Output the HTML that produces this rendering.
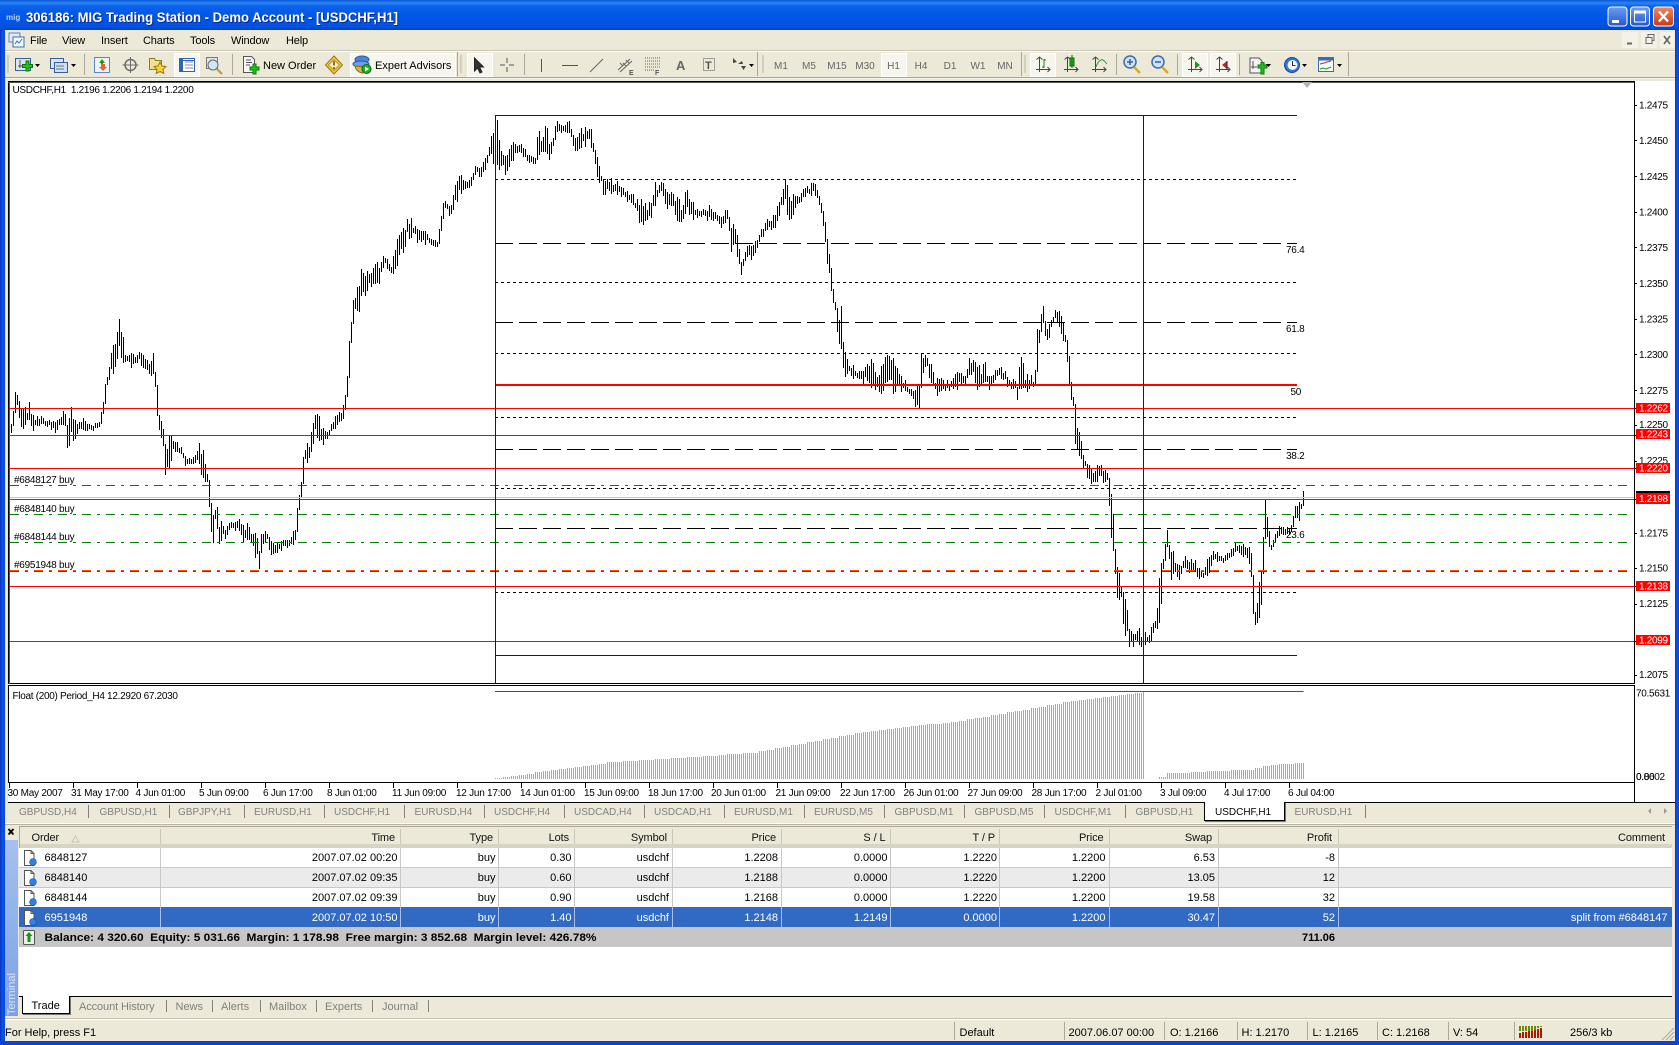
<!DOCTYPE html>
<html><head><meta charset="utf-8"><title>MIG Trading Station</title>
<style>
html,body{margin:0;padding:0;background:#ece9d8;width:1679px;height:1045px;overflow:hidden}
svg{display:block;position:absolute;left:0;top:0}
text{font-family:"Liberation Sans",sans-serif;font-size:11px;fill:#000;white-space:pre}
.c,.c text{font-size:10px;letter-spacing:-.3px}
.a,.a text{font-size:10px;letter-spacing:-.25px}
.w,.w text{fill:#fff}
.tab text{font-size:10px;fill:#808080}
.tb text{font-size:10px;fill:#666}
.g,.g text{fill:#808080}
.m text{letter-spacing:-.15px}
.hd,.hd text{font-size:11px;fill:#111;letter-spacing:-.1px}
.sep{stroke:#aca899;stroke-width:1;shape-rendering:crispEdges}
.l{shape-rendering:crispEdges;fill:none}
</style></head><body>
<svg width="1679" height="1045" viewBox="0 0 1679 1045" xmlns="http://www.w3.org/2000/svg">
<defs>
<linearGradient id="tg" x1="0" y1="0" x2="0" y2="1">
<stop offset="0" stop-color="#0a56d6"/><stop offset=".1" stop-color="#2a86f4"/><stop offset=".2" stop-color="#0d62ea"/><stop offset=".55" stop-color="#0057e8"/><stop offset=".88" stop-color="#0052e2"/><stop offset="1" stop-color="#0042c8"/>
</linearGradient>
<linearGradient id="lb" x1="0" y1="0" x2="1" y2="0"><stop offset="0" stop-color="#0a30b8"/><stop offset=".5" stop-color="#0a56ec"/><stop offset="1" stop-color="#0a44d8"/></linearGradient>
<linearGradient id="mb" x1="0" y1="0" x2="0" y2="1"><stop offset="0" stop-color="#6f9cf0"/><stop offset="1" stop-color="#2358cc"/></linearGradient>
<linearGradient id="cb" x1="0" y1="0" x2="0" y2="1"><stop offset="0" stop-color="#f08a60"/><stop offset="1" stop-color="#c83a10"/></linearGradient>
<linearGradient id="st" x1="0" y1="0" x2="0" y2="1"><stop offset="0" stop-color="#a6c0ee"/><stop offset="1" stop-color="#7ea1e2"/></linearGradient>
<symbol id="doc" viewBox="0 0 14 16" width="14" height="16">
<path d="M1.5 .5H8L11 3.5V15.5H1.5Z" fill="#fff" stroke="#555"/><path d="M8 .5V3.5H11" fill="none" stroke="#555"/><circle cx="10" cy="12" r="3.4" fill="#2f80e8" stroke="#1a4fa8" stroke-width=".6"/>
</symbol>
<symbol id="ax" viewBox="0 0 16 18" width="16" height="18">
<path d="M4.5 1V16M1 13.5H15M1.5 3.5L4.5 1L7.5 3.5M12.5 11L15 13.5L12.5 16" fill="none" stroke="#444" stroke-width="1"/>
</symbol>
</defs>

<rect x="0" y="0" width="1679" height="1045" fill="#ece9d8"/>
<rect x="0" y="0" width="1679" height="30" fill="url(#tg)"/>
<rect x="0" y="30" width="5" height="1015" fill="url(#lb)"/>
<rect x="1675" y="30" width="4" height="1015" fill="url(#lb)"/>
<rect x="0" y="1041" width="1679" height="4" fill="#0a44d0"/>

<!-- title -->
<text x="6" y="20" style="font-size:8px;fill:#bcd0f2;font-weight:bold">mig</text>
<text x="26" y="22" textLength="372" lengthAdjust="spacingAndGlyphs" style="font-size:14px;font-weight:bold;fill:#0a2a90" transform="translate(1,1)">306186: MIG Trading Station - Demo Account - [USDCHF,H1]</text>
<text x="26" y="22" textLength="372" lengthAdjust="spacingAndGlyphs" style="font-size:14px;font-weight:bold;fill:#fff">306186: MIG Trading Station - Demo Account - [USDCHF,H1]</text>
<rect x="1608" y="7" width="19" height="19" rx="3" fill="url(#mb)" stroke="#fff"/>
<rect x="1612" y="20" width="7" height="3" fill="#fff"/>
<rect x="1630.5" y="7" width="19" height="19" rx="3" fill="url(#mb)" stroke="#fff"/>
<rect x="1634.5" y="11" width="11" height="11" fill="none" stroke="#fff"/><rect x="1634" y="10.5" width="12" height="3" fill="#fff"/>
<rect x="1653.5" y="7" width="20" height="19" rx="3" fill="url(#cb)" stroke="#fff"/>
<path d="M1659 11.5L1668 21.5M1668 11.5L1659 21.5" stroke="#fff" stroke-width="2.4"/>

<!-- menu -->
<rect x="5" y="30" width="1670" height="20" fill="#ece9d8"/>
<path d="M5 50.5H1675" stroke="#c9c6b6" class="l"/><path d="M5 51.5H1675" stroke="#fff" class="l"/>
<rect x="9" y="33" width="11" height="9" fill="#dfe9f9" stroke="#5a86c8"/><rect x="13" y="37" width="11" height="10" fill="#f4f8ff" stroke="#3e6fb8"/><path d="M15 44l2-3 2 2 3-4" stroke="#3e6fb8" fill="none"/>
<g class="m"><text x="30" y="44">File</text><text x="62" y="44">View</text><text x="101" y="44">Insert</text><text x="143" y="44">Charts</text><text x="190" y="44">Tools</text><text x="231" y="44">Window</text><text x="286" y="44">Help</text></g>
<rect x="1622" y="32" width="16" height="16" fill="#f4f2e8"/><rect x="1641" y="32" width="16" height="16" fill="#f4f2e8"/><rect x="1660" y="32" width="15" height="16" fill="#f4f2e8"/>
<path d="M1627 43.5h5" stroke="#666" stroke-width="2"/>
<rect x="1646" y="37.5" width="6" height="6" fill="none" stroke="#666"/><path d="M1648 37v-2.5h6v6h-2" fill="none" stroke="#666"/>
<path d="M1664 36l6 8M1670 36l-6 8" stroke="#666" stroke-width="1.6"/>

<!-- toolbar -->
<path d="M5 77.5H1675" stroke="#a8a596" class="l"/><path d="M5 78.5H1675" stroke="#f5f3ea" class="l"/>
<g fill="#b8b5a6">
<path d="M7 56h3M7 58h3M7 60h3M7 62h3M7 64h3M7 66h3M7 68h3M7 70h3M7 72h3" stroke="#b8b5a6" stroke-dasharray="2 1"/>
<path d="M460 56h3M460 58h3M460 60h3M460 62h3M460 64h3M460 66h3M460 68h3M460 70h3M460 72h3" stroke="#b8b5a6" stroke-dasharray="2 1"/>
<path d="M762 56h3M762 58h3M762 60h3M762 62h3M762 64h3M762 66h3M762 68h3M762 70h3M762 72h3" stroke="#b8b5a6" stroke-dasharray="2 1"/>
<path d="M1024 56h3M1024 58h3M1024 60h3M1024 62h3M1024 64h3M1024 66h3M1024 68h3M1024 70h3M1024 72h3" stroke="#b8b5a6" stroke-dasharray="2 1"/>
</g>
<g class="sep"><path d="M84.5 54V75M232.5 54V75M457.5 52V76M524.5 54V75M757.5 52V76M1021.5 52V76M1116.5 54V75M1177.5 54V75M1239.5 54V75M1348.5 52V76"/></g>
<!-- selected boxes -->
<g fill="#f6f5ee" stroke="#fff"><rect x="174.5" y="53.5" width="25" height="23"/><rect x="350.5" y="53.5" width="105" height="23"/><rect x="467.5" y="53.5" width="25" height="23"/><rect x="881.5" y="53.5" width="25" height="23"/><rect x="1030.5" y="53.5" width="25" height="23"/><rect x="1182.5" y="53.5" width="25" height="23"/><rect x="1210.5" y="53.5" width="25" height="23"/></g>
<!-- add chart -->
<rect x="15.5" y="58.5" width="15" height="12" fill="#dce6f2" stroke="#3a5f96"/><path d="M20 60v8M18 66h8" stroke="#555" fill="none"/>
<path d="M27 60h3v3.5h3.5v3h-3.5v3.500h-3v-3.500h-3.500v-3h3.500z" transform="translate(-1,1)" fill="#1cc41c" stroke="#0b7a0b"/>
<path d="M35 64h5l-2.500 3z" fill="#000"/>
<rect x="50.500" y="58.500" width="13" height="10" fill="#dce6f2" stroke="#3a5f96"/><rect x="54.500" y="62.500" width="13" height="10" fill="#cfdff4" stroke="#3a5f96"/><path d="M56 66h8M56 69h8" stroke="#678"/>
<path d="M71 64h5l-2.500 3z" fill="#000"/>
<!-- arrows window -->
<rect x="94.500" y="57.500" width="15" height="15" fill="#eef3fa" stroke="#5a86c8"/><path d="M99 63l3-4 3 4h-2v3h-2v-3z" fill="#1a9a1a"/><path d="M100 66h4v3h2l-4 4-4-4h2z" transform="translate(1,-2)" fill="#e8622a"/>
<!-- crosshair -->
<circle cx="130.500" cy="65" r="5.500" fill="none" stroke="#6b6b6b" stroke-width="1.500"/><path d="M130.500 57v16M122.500 65h16" stroke="#6b6b6b"/>
<!-- folders star -->
<path d="M149.500 58.500h5l1 2h6v9h-12z" fill="#f5e08a" stroke="#8a7a30"/><path d="M160 62l2 4 4 .5-3 3 .800 4-3.800-2-3.800 2 .800-4-3-3 4-.500z" fill="#f6d23c" stroke="#9a7d10"/>
<!-- market watch -->
<rect x="179.500" y="58.500" width="15" height="13" fill="#fff" stroke="#2f64b4"/><rect x="180" y="59" width="3" height="12" fill="#2f64b4"/><path d="M185 62h8M185 65h8M185 68h8" stroke="#889"/><rect x="180" y="60" width="14" height="1" fill="#2f64b4"/>
<!-- magnify -->
<rect x="206.500" y="57.500" width="11" height="11" fill="#dfe4ee" stroke="#7a7a7a"/><circle cx="213" cy="65" r="5" fill="#d3e6f7" stroke="#6a6a6a"/><path d="M217 69l5 5" stroke="#c89a2a" stroke-width="2.200"/>
<!-- new order -->
<path d="M243.500 56.500h8l3 3v13h-11z" fill="#f8f8f8" stroke="#555"/><path d="M246 60h5M246 62.500h6M246 65h4" stroke="#555"/>
<path d="M250 66h3v-3h3v3h3v3h-3v4h-3v-4h-3z" fill="#1cc41c" stroke="#0b7a0b" transform="translate(0,1)"/>
<text x="263" y="69">New Order</text>
<path d="M334 56l8.500 9-8.500 9-8.500-9z" fill="#f4cc40" stroke="#9a7812"/><path d="M334 59.500l5.500 5.500-5.500 5.500-5.500-5.500z" fill="#fbeec0" stroke="#b8902a"/><path d="M334 61v4.500" stroke="#7a4a00" stroke-width="1.500"/><circle cx="334" cy="68" r="1" fill="#7a4a00"/>
<!-- expert hat -->
<ellipse cx="362" cy="59.500" rx="7" ry="3.500" fill="#4a86d8" stroke="#2a5aa8"/><ellipse cx="361" cy="64" rx="8" ry="3" fill="#6aa0e4" stroke="#2a5aa8"/><path d="M355 66c1 5 5 7 8 7v-6z" fill="#d8b24c" stroke="#8a6a18"/><circle cx="366.500" cy="69" r="4.500" fill="#22b022" stroke="#0b6a0b"/><path d="M365 66.500l4 2.500-4 2.500z" fill="#fff"/>
<text x="375" y="69">Expert Advisors</text>
<!-- cursor -->
<path d="M474.500 58v13l3-3 2.500 5 2-1-2.500-5h4z" fill="#333" stroke="#222"/>
<path d="M507 58v14M500 65h14" stroke="#555"/><path d="M507 63v4M505 65h4" stroke="#ece9d8" stroke-width="2"/>
<path d="M541.500 59v13" stroke="#555"/><path d="M562 65.500h16" stroke="#555"/><path d="M590 72l13-13" stroke="#666"/>
<path d="M618 70l12-11M620 72l12-11M623 66l-3-3M626 66l-3-3M629 63l-3-3" stroke="#666" fill="none"/><text x="629" y="75" style="font-size:7px;fill:#555;font-weight:bold">E</text>
<path d="M645 58h15M645 61h15M645 64h15M645 67h15M645 70h10" stroke="#666" stroke-dasharray="1 1"/><text x="655" y="75" style="font-size:7px;fill:#555;font-weight:bold">F</text>
<text x="676" y="70" style="font-size:13px;font-weight:bold;fill:#666">A</text>
<rect x="703.500" y="58.500" width="11" height="12" fill="none" stroke="#555" stroke-dasharray="1 1"/><text x="705" y="69" style="font-size:11px;font-weight:bold;fill:#555">T</text>
<path d="M733 58l4 4-4 1zM738 64l4-3 1 3zM741 66l5 0-2.500 4z" fill="#444"/><path d="M749 64h5l-2.500 3z" fill="#000"/>
<!-- periods -->
<g class="tb" text-anchor="middle">
<text x="781" y="69">M1</text><text x="809" y="69">M5</text><text x="837" y="69">M15</text><text x="865" y="69">M30</text><text x="893.500" y="69">H1</text><text x="921" y="69">H4</text><text x="950" y="69">D1</text><text x="978" y="69">W1</text><text x="1005" y="69">MN</text>
</g>
<!-- chart types -->
<use href="#ax" x="1035" y="56"/><path d="M1044 59v9M1044 60h2M1042 67h2" stroke="#0a8a0a" fill="none"/>
<use href="#ax" x="1063" y="56"/><rect x="1070" y="58" width="4" height="8" fill="#20c020" stroke="#0a6a0a"/><path d="M1072 55v13" stroke="#0a6a0a"/>
<use href="#ax" x="1091" y="56"/><path d="M1096 67c2-6 5-8 7-7s3 3 4 4" fill="none" stroke="#2a9a3a"/>
<!-- zoom -->
<circle cx="1130" cy="62" r="6" fill="#cfe2f7" stroke="#3a6ea8" stroke-width="1.500"/><path d="M1127 62h6M1130 59v6" stroke="#2f60a0" stroke-width="1.500"/><path d="M1134 67l6 6" stroke="#d8a830" stroke-width="2.500"/>
<circle cx="1158" cy="62" r="6" fill="#cfe2f7" stroke="#3a6ea8" stroke-width="1.500"/><path d="M1155 62h6" stroke="#2f60a0" stroke-width="1.500"/><path d="M1162 67l6 6" stroke="#d8a830" stroke-width="2.500"/>
<use href="#ax" x="1187" y="56"/><path d="M1195 61v8l5-4z" fill="#1a9a1a"/>
<use href="#ax" x="1215" y="56"/><path d="M1227 61v8l-5-4z" fill="#c02a10"/><path d="M1227 61v9" stroke="#223"/>
<!-- new chart -->
<path d="M1250 58h9l3 3v12h-12z" fill="#f4f4f4" stroke="#555"/><path d="M1253 61v8M1251 67h6" stroke="#555"/><path d="M1258 65h3v-2.500h3v2.500h3v3h-3v6h-3v-6h-3z" fill="#1cc41c" stroke="#0b7a0b"/>
<path d="M1266 64h5l-2.500 3z" fill="#000"/>
<circle cx="1292" cy="65" r="7.500" fill="#2c74d8" stroke="#164a9c"/><circle cx="1292.500" cy="65" r="5" fill="#eef4fb"/><path d="M1292.500 61v4.500h3" fill="none" stroke="#333"/>
<path d="M1302 64h5l-2.500 3z" fill="#000"/>
<rect x="1318.500" y="57.500" width="15" height="14" fill="#f6f8fc" stroke="#3a6ea8"/><rect x="1319" y="58" width="14" height="2.500" fill="#3a6ea8"/><path d="M1320 64l4-1 3-1 4-1" stroke="#c0321a" fill="none"/><path d="M1320 69l3-1 3 1 5-2" stroke="#1a9a1a" fill="none"/>
<path d="M1337 64h5l-2.500 3z" fill="#000"/>

<!-- chart area -->
<rect x="8" y="81" width="1667" height="721" fill="#fff"/>
<path id="bars" class="l" stroke="#000" stroke-width="1" d=""/>
<!-- horizontal objects -->
<g class="l">
<path d="M8 408.500H1634M8 435.500H1634M8 468.500H1634M8 499.500H1634M8 586.500H1634M8 641.500H1634" stroke="#f00"/>
<path d="M8 497.500H1634" stroke="#c6c6c6"/>
<path d="M10 485.500H1627M10 514.500H1627M10 542.500H1627M10 571.500H1627" stroke="#008000" stroke-dasharray="9 6 3 6"/>
<path d="M10 570.500H1627" stroke="#ff4500" stroke-dasharray="9 6 3 6"/>
<path d="M495 179.500H1297M495 282.500H1297M495 353.500H1297M495 417.500H1297M495 488.500H1297M495 592.500H1297" stroke="#000" stroke-dasharray="3 3"/>
<path d="M495 243.500H1297M495 322.500H1297M495 449.500H1297M495 528.500H1297" stroke="#000" stroke-dasharray="18 6"/>
<rect x="495" y="384" width="802" height="2" fill="#f00"/>
<path d="M495.500 115V683M1143.500 115V683" stroke="#00f"/>
<path d="M495 115.500H1297M495 655.500H1297" stroke="#00f"/>
<path d="M495 691.500H1303.500" stroke="#a52a2a"/>
<path id="cy" stroke="#00f0f0" d=""/>
</g>
<!-- frames -->
<g class="l" stroke="#000">
<path d="M8.500 81.500H1634.500V683.500H8.500Z" stroke-width="1"/>
<path d="M8 82.500H1634M9.500 82V684" stroke="#555"/>
<path d="M8.500 685.500H1634.500V782.500H8.500Z"/>
<path d="M8 802.500H1675"/>
<path d="M1634.500 685V802" stroke="#000"/>
</g>
<path d="M1302 82h10l-5 6z" fill="#b4b4b4"/>
<!-- chart text -->
<text class="c" x="12.500" y="93">USDCHF,H1  1.2196 1.2206 1.2194 1.2200</text>
<text class="c" x="12.500" y="699">Float (200) Period_H4 12.2920 67.2030</text>
<g class="a">
<text x="14" y="483">#6848127 buy</text><text x="14" y="512">#6848140 buy</text><text x="14" y="540">#6848144 buy</text><text x="14" y="568">#6951948 buy</text>
<text x="1286" y="253">76.4</text><text x="1286" y="332">61.8</text><text x="1290.500" y="395">50</text><text x="1286" y="459">38.2</text><text x="1286" y="538">23.6</text>
</g>
<!-- price axis -->
<path class="l" stroke="#000" d="M1634 105.500h3M1634 140.500h3M1634 176.500h3M1634 212.500h3M1634 247.500h3M1634 283.500h3M1634 319.500h3M1634 354.500h3M1634 390.500h3M1634 425.500h3M1634 461.500h3M1634 533.500h3M1634 568.500h3M1634 604.500h3M1634 675.500h3M1634 408.500h3M1634 435.500h3M1634 468.500h3M1634 499.500h3M1634 586.500h3M1634 641.500h3"/>
<g class="c">
<text x="1639" y="108.500">1.2475</text><text x="1639" y="144">1.2450</text><text x="1639" y="180">1.2425</text><text x="1639" y="215.500">1.2400</text><text x="1639" y="251">1.2375</text><text x="1639" y="287">1.2350</text><text x="1639" y="322.500">1.2325</text><text x="1639" y="358">1.2300</text><text x="1639" y="394">1.2275</text><text x="1639" y="428">1.2250</text><text x="1639" y="464">1.2225</text><text x="1639" y="536.500">1.2175</text><text x="1639" y="571.500">1.2150</text><text x="1639" y="607">1.2125</text><text x="1639" y="678">1.2075</text>
<text x="1636" y="696.500">70.5631</text><text x="1636" y="780">0.8602</text><text x="1636" y="780">0.00</text>
</g>
<rect x="1636" y="491" width="34" height="2" fill="#000"/>
<g fill="#f00"><rect x="1636" y="403" width="34" height="10"/><rect x="1636" y="429" width="34" height="10"/><rect x="1636" y="463" width="34" height="10"/><rect x="1636" y="493" width="34" height="11"/><rect x="1636" y="581" width="34" height="10"/><rect x="1636" y="635" width="34" height="10"/></g>
<g class="c w">
<text x="1639" y="411.500">1.2262</text><text x="1639" y="437.500">1.2243</text><text x="1639" y="471.500">1.2220</text><text x="1639" y="502">1.2198</text><text x="1639" y="589.500">1.2138</text><text x="1639" y="643.500">1.2099</text>
</g>
<!-- time axis -->
<path class="l" stroke="#000" d="M9.500 782v6M73.500 782v6M137.500 782v6M201.500 782v6M265.500 782v6M329.500 782v6M393.500 782v6M457.500 782v6M521.500 782v6M585.500 782v6M649.500 782v6M713.500 782v6M777.500 782v6M841.500 782v6M905.500 782v6M969.500 782v6M1033.500 782v6M1097.500 782v6M1161.500 782v6M1225.500 782v6M1289.500 782v6"/>
<g class="a">
<text x="7.500" y="796">30 May 2007</text><text x="71" y="796">31 May 17:00</text><text x="135.500" y="796">4 Jun 01:00</text><text x="199" y="796">5 Jun 09:00</text><text x="263" y="796">6 Jun 17:00</text><text x="327" y="796">8 Jun 01:00</text><text x="392" y="796">11 Jun 09:00</text><text x="456" y="796">12 Jun 17:00</text><text x="520" y="796">14 Jun 01:00</text><text x="584" y="796">15 Jun 09:00</text><text x="648" y="796">18 Jun 17:00</text><text x="711" y="796">20 Jun 01:00</text><text x="775.500" y="796">21 Jun 09:00</text><text x="840" y="796">22 Jun 17:00</text><text x="903.500" y="796">26 Jun 01:00</text><text x="967.500" y="796">27 Jun 09:00</text><text x="1031.500" y="796">28 Jun 17:00</text><text x="1095.500" y="796">2 Jul 01:00</text><text x="1160" y="796">3 Jul 09:00</text><text x="1224" y="796">4 Jul 17:00</text><text x="1288" y="796">6 Jul 04:00</text>
</g>

<!-- chart tabs -->
<rect x="5" y="803" width="1670" height="20" fill="#ece9d8"/>
<path class="l" stroke="#fff" d="M5 823.500H1675"/><path class="l" stroke="#b8b5a6" d="M5 824.500H1675"/>
<rect x="1205" y="802" width="80" height="19" fill="#fff"/>
<path class="l" stroke="#000" d="M1204.500 802V820.500H1284.500V802" stroke-width="1"/>
<path class="l" stroke="#777" d="M1205 821.500H1286M1285.500 803V821"/>
<g class="l" stroke="#808080"><path d="M88.500 805V818M169.500 805V818M244.500 805V818M324.500 805V818M404.500 805V818M484.500 805V818M564.500 805V818M644.500 805V818M724.500 805V818M804.500 805V818M884.500 805V818M964.500 805V818M1044.500 805V818M1125.500 805V818M1365.500 805V818"/></g>
<g class="tab">
<text x="19" y="815">GBPUSD,H4</text><text x="99.500" y="815">GBPUSD,H1</text><text x="178" y="815">GBPJPY,H1</text><text x="254" y="815">EURUSD,H1</text><text x="334" y="815">USDCHF,H1</text><text x="414.500" y="815">EURUSD,H4</text><text x="494" y="815">USDCHF,H4</text><text x="574" y="815">USDCAD,H4</text><text x="654" y="815">USDCAD,H1</text><text x="734" y="815">EURUSD,M1</text><text x="814" y="815">EURUSD,M5</text><text x="894.500" y="815">GBPUSD,M1</text><text x="974.500" y="815">GBPUSD,M5</text><text x="1054.500" y="815">USDCHF,M1</text><text x="1135.500" y="815">GBPUSD,H1</text><text x="1294.500" y="815">EURUSD,H1</text>
</g>
<text x="1215" y="815" style="font-size:10px">USDCHF,H1</text>
<path d="M1651 808v6l-3-3z" fill="#9a9a9a"/><path d="M1664 808v6l3-3z" fill="#9a9a9a"/>

<!-- terminal -->
<rect x="5" y="827" width="14" height="13" fill="#ece9d8"/>
<rect x="5" y="840" width="13" height="176" fill="url(#st)"/>
<path d="M8.500 829l5 5.500M13.500 829l-5 5.500" stroke="#000" stroke-width="1.800"/>
<text transform="translate(15,1015) rotate(-90)" textLength="42" lengthAdjust="spacingAndGlyphs" style="font-size:11px;fill:#d8e4f8">Terminal</text>
<rect x="19" y="827" width="1653" height="170" fill="#fff"/>
<rect x="19" y="827" width="1653" height="21" fill="#ece9d8"/>
<path class="l" stroke="#aca899" d="M19 826.500H1672"/>
<rect x="19" y="844" width="1653" height="4" fill="#d8d4c4"/>
<path class="l" stroke="#aca899" d="M19.500 827V848"/>
<g class="l" stroke="#cbc7b8"><path d="M160.500 829V844M400.500 829V844M498.500 829V844M574.500 829V844M672.500 829V844M781.500 829V844M890.500 829V844M999.500 829V844M1109.500 829V844M1218.500 829V844M1338.500 829V844"/></g>
<g class="hd" text-anchor="end">
<text x="395" y="841">Time</text><text x="493" y="841">Type</text><text x="569" y="841">Lots</text><text x="667" y="841">Symbol</text><text x="776" y="841">Price</text><text x="885.500" y="841">S / L</text><text x="995" y="841">T / P</text><text x="1103.500" y="841">Price</text><text x="1212" y="841">Swap</text><text x="1332" y="841">Profit</text><text x="1665" y="841">Comment</text>
</g>
<text class="hd" x="31.500" y="841">Order</text>
<path d="M72 842l3.500-6 3.500 6z" fill="none" stroke="#c8c5b6"/>
<rect x="19" y="868" width="1653" height="20" fill="#ebebeb"/>
<rect x="19" y="907" width="1653" height="20" fill="#316ac5"/>
<rect x="19" y="927" width="1653" height="20" fill="#c6c6c6"/>
<path class="l" stroke="#c8c8c8" d="M19 867.500H1672M19 887.500H1672M160.500 848V907M400.500 848V907M498.500 848V907M574.500 848V907M672.500 848V907M781.500 848V907M890.500 848V907M999.500 848V907M1109.500 848V907M1218.500 848V907M1338.500 848V907"/>
<path class="l" stroke="#a9c0e6" d="M160.500 907V927M400.500 907V927M498.500 907V927M574.500 907V927M672.500 907V927M781.500 907V927M890.500 907V927M999.500 907V927M1109.500 907V927M1218.500 907V927M1338.500 907V927"/>
<use href="#doc" x="23" y="850"/><use href="#doc" x="23" y="870"/><use href="#doc" x="23" y="890"/><use href="#doc" x="23" y="910"/>
<rect x="23.500" y="930.500" width="11" height="14" rx="1" fill="#eee" stroke="#555"/><path d="M29 932l3.500 4h-2v6h-3v-6h-2z" fill="#109a10"/>
<g>
<text x="44.500" y="861">6848127</text><text x="44.500" y="881">6848140</text><text x="44.500" y="901">6848144</text>
<g text-anchor="end">
<text x="397.500" y="861">2007.07.02 00:20</text><text x="495.500" y="861">buy</text><text x="571.500" y="861">0.30</text><text x="669" y="861">usdchf</text><text x="778" y="861">1.2208</text><text x="887.500" y="861">0.0000</text><text x="997" y="861">1.2220</text><text x="1105.500" y="861">1.2200</text><text x="1215" y="861">6.53</text><text x="1335" y="861">-8</text>
<text x="397.500" y="881">2007.07.02 09:35</text><text x="495.500" y="881">buy</text><text x="571.500" y="881">0.60</text><text x="669" y="881">usdchf</text><text x="778" y="881">1.2188</text><text x="887.500" y="881">0.0000</text><text x="997" y="881">1.2220</text><text x="1105.500" y="881">1.2200</text><text x="1215" y="881">13.05</text><text x="1335" y="881">12</text>
<text x="397.500" y="901">2007.07.02 09:39</text><text x="495.500" y="901">buy</text><text x="571.500" y="901">0.90</text><text x="669" y="901">usdchf</text><text x="778" y="901">1.2168</text><text x="887.500" y="901">0.0000</text><text x="997" y="901">1.2220</text><text x="1105.500" y="901">1.2200</text><text x="1215" y="901">19.58</text><text x="1335" y="901">32</text>
</g>
</g>
<text class="w" x="44.500" y="921">6951948</text>
<g text-anchor="end" class="w">
<text x="397.500" y="921">2007.07.02 10:50</text><text x="495.500" y="921">buy</text><text x="571.500" y="921">1.40</text><text x="669" y="921">usdchf</text><text x="778" y="921">1.2148</text><text x="887.500" y="921">1.2149</text><text x="997" y="921">0.0000</text><text x="1105.500" y="921">1.2200</text><text x="1215" y="921">30.47</text><text x="1335" y="921">52</text><text x="1667.500" y="921">split from #6848147</text>
</g>
<text x="44.500" y="941" textLength="552" lengthAdjust="spacingAndGlyphs" style="font-weight:bold">Balance: 4 320.60  Equity: 5 031.66  Margin: 1 178.98  Free margin: 3 852.68  Margin level: 426.78%</text>
<text x="1335" y="941" text-anchor="end" style="font-weight:bold">711.06</text>

<!-- terminal tabs -->
<rect x="19" y="997" width="1653" height="21" fill="#ece9d8"/>
<path class="l" stroke="#000" d="M19 996.500H1672"/>
<rect x="22" y="996" width="48" height="18" fill="#fff"/>
<path class="l" stroke="#000" d="M22.500 996V1013.500H69.500V996"/>
<path class="l" stroke="#777" d="M23 1014.500H71M70.500 997V1014"/>
<path class="l" stroke="#808080" d="M166.500 1000V1012M212.500 1000V1012M260.500 1000V1012M316.500 1000V1012M372.500 1000V1012M428.500 1000V1012"/>
<text x="31.500" y="1009">Trade</text>
<g class="g">
<text x="79" y="1010" style="letter-spacing:-.1px">Account History</text><text x="175.500" y="1010">News</text><text x="221" y="1010">Alerts</text><text x="269" y="1010">Mailbox</text><text x="325" y="1010">Experts</text><text x="382" y="1010">Journal</text>
</g>
<path class="l" stroke="#c2bfb0" d="M5 1018.500H1675"/><path class="l" stroke="#fff" d="M5 1019.500H1675"/>
<!-- status -->
<text x="5" y="1036">For Help, press F1</text>
<path class="l" stroke="#aca899" d="M954.500 1022V1040M1064.500 1022V1040M1164.500 1022V1040M1237.500 1022V1040M1307.500 1022V1040M1377.500 1022V1040M1448.500 1022V1040M1514.500 1022V1040"/>
<g>
<text x="959.500" y="1036">Default</text><text x="1068.500" y="1036">2007.06.07 00:00</text><text x="1170" y="1036">O: 1.2166</text><text x="1241.500" y="1036">H: 1.2170</text><text x="1312.500" y="1036">L: 1.2165</text><text x="1382" y="1036">C: 1.2168</text><text x="1453" y="1036">V: 54</text><text x="1570" y="1036">256/3 kb</text>
</g>
<path class="l" stroke="#6e8c00" stroke-width="2" d="M1520 1026V1031M1523 1026V1031M1526 1026V1031M1529 1026V1031M1532 1026V1031M1535 1026V1030M1538 1026V1028M1541 1026V1027"/>
<path class="l" stroke="#a81c00" stroke-width="2" d="M1520 1033V1038M1523 1032V1038M1526 1032V1038M1529 1031V1038M1532 1031V1038M1535 1030V1038M1538 1029V1038M1541 1028V1038"/>
<path stroke="#aca899" d="M1662 1040l12-12M1666 1040l8-8M1670 1040l4-4"/>
</svg>
<script>
(function(){
var k=[[9,417,445],[11,417,445],[15,390,415],[17,387,415],[21,397,430],[25,404,435],[29,401,425],[33,412,435],[40,415,425],[50,418,430],[54,417,436],[60,415,425],[64,405,430],[68,424,455],[71,397,432],[73,415,445],[80,418,434],[85,418,434],[92,425,430],[100,420,423],[102,400,423],[105,383,395],[108,365,392],[112,348,375],[116,331,385],[119,314,363],[125,348,370],[135,353,367],[140,345,366],[150,363,378],[154,348,382],[157,395,427],[160,410,437],[163,427,458],[165,448,475],[169,435,470],[173,434,455],[180,445,455],[185,455,467],[192,458,467],[199,440,465],[203,448,486],[207,468,487],[210,480,525],[212,510,555],[216,487,530],[219,517,548],[224,525,540],[232,520,532],[236,514,535],[243,520,543],[250,525,550],[255,530,560],[259,540,573],[262,525,555],[266,525,540],[270,540,555],[275,542,556],[282,540,550],[290,535,548],[295,525,545],[297,498,530],[299,495,520],[302,460,495],[305,442,470],[310,430,468],[315,405,440],[321,420,445],[325,430,445],[330,420,440],[335,410,430],[340,405,425],[344,405,425],[346,383,398],[349,333,375],[352,291,335],[356,285,315],[362,265,310],[368,271,288],[380,257,285],[385,255,265],[390,265,277],[395,247,280],[400,227,255],[403,227,253],[407,213,242],[413,220,240],[418,228,245],[425,227,245],[432,240,247],[438,237,250],[441,203,235],[445,195,212],[451,200,220],[456,180,205],[460,173,195],[465,175,190],[470,180,190],[475,161,178],[480,163,180],[485,155,170],[490,133,165],[493,123,165],[497,120,173],[501,148,170],[505,150,175],[510,141,165],[515,142,160],[520,142,157],[527,150,163],[535,157,165],[537,124,160],[540,130,165],[546,122,167],[550,140,160],[557,118,140],[562,122,132],[570,120,135],[575,135,157],[582,123,150],[590,125,145],[597,155,185],[603,170,195],[607,172,197],[617,180,197],[630,190,205],[636,197,215],[642,195,233],[647,207,222],[655,180,215],[660,180,190],[668,180,215],[675,190,220],[682,205,226],[686,175,215],[692,200,220],[700,205,222],[710,205,220],[718,215,225],[722,215,230],[727,207,220],[731,220,255],[735,222,250],[738,235,265],[740,257,275],[742,258,278],[746,245,260],[753,245,262],[758,235,245],[765,220,235],[773,215,230],[778,195,230],[783,185,205],[785,174,200],[788,190,225],[795,195,212],[800,190,205],[808,185,195],[815,180,198],[820,200,208],[823,208,228],[827,233,265],[829,238,295],[832,277,302],[835,300,315],[838,320,350],[841,300,368],[845,350,377],[850,360,378],[858,370,382],[862,368,384],[870,350,388],[875,370,400],[882,365,395],[889,342,385],[895,362,400],[900,375,392],[905,378,392],[912,385,405],[919,378,410],[921,345,377],[926,350,372],[930,355,385],[935,372,398],[942,378,398],[950,380,390],[955,370,392],[960,372,388],[965,372,388],[968,358,382],[972,357,378],[975,352,390],[980,365,392],[985,362,388],[990,375,393],[995,367,383],[1000,363,378],[1005,370,385],[1010,380,392],[1015,375,392],[1017,378,405],[1020,347,395],[1025,372,392],[1030,372,392],[1033,380,388],[1035,365,378],[1037,327,365],[1040,312,345],[1042,295,330],[1045,320,342],[1048,325,342],[1052,317,328],[1056,308,322],[1060,312,335],[1064,325,345],[1066,335,355],[1069,345,385],[1071,378,412],[1073,395,412],[1075,415,445],[1082,440,470],[1090,465,490],[1100,463,480],[1108,465,490],[1112,490,560],[1115,525,590],[1117,560,603],[1121,570,610],[1124,590,645],[1127,607,645],[1131,625,652],[1137,625,645],[1142,630,650],[1147,632,645],[1152,625,645],[1157,602,630],[1160,565,622],[1163,555,575],[1167,530,553],[1170,540,580],[1175,552,580],[1180,565,580],[1185,555,570],[1190,558,575],[1196,560,580],[1203,570,578],[1207,556,580],[1212,544,565],[1218,553,564],[1223,556,563],[1228,550,560],[1235,541,555],[1240,540,555],[1246,548,560],[1250,545,565],[1252,560,610],[1254,600,625],[1256,615,641],[1258,590,625],[1261,560,605],[1263,525,570],[1265,499,535],[1268,525,545],[1271,540,552],[1275,532,545],[1280,525,535],[1285,527,537],[1290,526,535],[1294,505,525],[1298,502,525],[1302,498,510],[1303,488,503]];
var s=12345;function r(){s=(s*1103515245+12345)&2147483647;return s/2147483647;}
function lerp(a,x){var n=a.length-1,p=0;while(p<n-1&&a[p+1][0]<x)p++;var A=a[p],B=a[p+1];var t=Math.max(0,Math.min(1,(x-A[0])/(B[0]-A[0])));return [A[1]+(B[1]-A[1])*t,A[2]+(B[2]-A[2])*t];}
var d="",pu=null,pv=null;
for(var x=9;x<=1303;x+=2){var e=lerp(k,x),h=e[1]-e[0],u=e[0]+r()*h*.42,v=e[1]-r()*h*.42;if(v-u<5)v=u+5;
if(pu!==null){if(v<pu+1)v=pu+2;if(u>pv-1)u=pv-2;}
u=Math.round(u);v=Math.round(v);pu=u;pv=v;d+="M"+(x+.5)+" "+u+"V"+v;}
document.getElementById("bars").setAttribute("d",d);
var c=[[495,778],[610,762],[750,753],[857,733],[964,720],[1071,701],[1141,692]],g=[[1159,777],[1167,773],[1180,773],[1210,771],[1250,770],[1255,768],[1265,766],[1275,764],[1303,763]];
function ci(a,x){for(var p=0;p<a.length-1;p++){if(x<=a[p+1][0]){var t=(x-a[p][0])/(a[p+1][0]-a[p][0]);return a[p][1]+(a[p+1][1]-a[p][1])*t;}}return a[a.length-1][1];}
var e2="";
for(var x2=495;x2<=1143;x2+=2){var q=Math.floor((x2-495)/8)*8+495;e2+="M"+(x2+.5)+" "+Math.round(ci(c,q))+"V779";}
for(var x3=1159;x3<=1303;x3+=2){var q3=Math.floor((x3-1159)/8)*8+1159;e2+="M"+(x3+.5)+" "+Math.round(ci(g,q3))+"V779";}
document.getElementById("cy").setAttribute("d",e2);
})();
</script>
</body></html>
